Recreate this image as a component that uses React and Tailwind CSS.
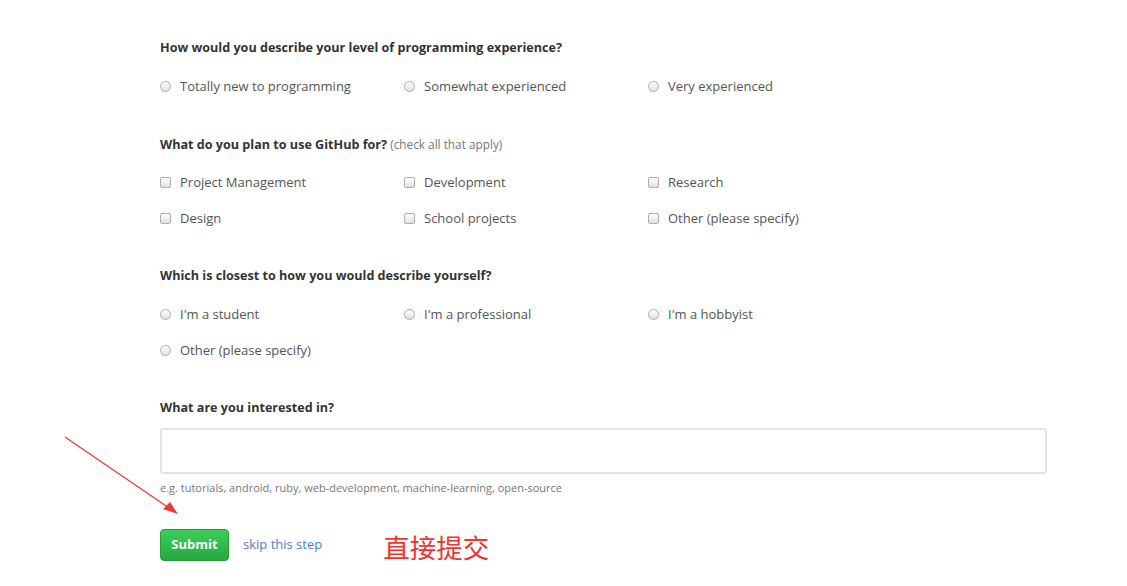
import { useState } from 'react';

const FONT = { fontFamily: '"Open Sans", "Liberation Sans", sans-serif' };

function Radio() {
  return (
    <span className="inline-block w-[11px] h-[11px] rounded-full border border-[#aeaeae] bg-gradient-to-b from-white to-[#e0e0e0] shrink-0" />
  );
}

function Checkbox() {
  return (
    <span className="inline-block w-[11px] h-[11px] rounded-[2px] border border-[#aeaeae] bg-gradient-to-b from-white to-[#e0e0e0] shrink-0" />
  );
}

function Option({ label, type }) {
  return (
    <label className="flex items-center gap-[9px] h-5 text-[13px] leading-5 text-[#555]">
      {type === 'radio' ? <Radio /> : <Checkbox />}
      <span>{label}</span>
    </label>
  );
}

function Question({ title, note, type, options }) {
  return (
    <div className="mb-[38px]">
      <h3 className="h-5 text-[12.6px] leading-5 font-bold text-[#333]">
        {title}
        {note && <span className="font-normal text-[11.8px] text-[#777]"> {note}</span>}
      </h3>
      <div className="mt-[18px] grid grid-cols-[244px_244px_244px] gap-y-4">
        {options.map((o) => (
          <Option key={o} label={o} type={type} />
        ))}
      </div>
    </div>
  );
}

export default function App() {
  const [interest, setInterest] = useState('');

  const questions = [
    {
      title: 'How would you describe your level of programming experience?',
      type: 'radio',
      options: ['Totally new to programming', 'Somewhat experienced', 'Very experienced'],
    },
    {
      title: 'What do you plan to use GitHub for?',
      note: '(check all that apply)',
      type: 'checkbox',
      options: ['Project Management', 'Development', 'Research', 'Design', 'School projects', 'Other (please specify)'],
    },
    {
      title: 'Which is closest to how you would describe yourself?',
      type: 'radio',
      options: ["I'm a student", "I'm a professional", "I'm a hobbyist", 'Other (please specify)'],
    },
  ];

  return (
    <div className="relative w-[1127px] h-[586px] bg-white overflow-hidden" style={FONT}>
      <div className="ml-[160px] w-[887px] pt-[38px]">
        {questions.map((q) => (
          <Question key={q.title} {...q} />
        ))}

        {/* Interests */}
        <div>
          <h3 className="h-5 text-[12.6px] leading-5 font-bold text-[#333]">What are you interested in?</h3>
          <input
            value={interest}
            onChange={(e) => setInterest(e.target.value)}
            className="mt-[10px] block w-full h-[46px] rounded-[3px] border-2 border-[#e3e3e3] bg-white outline-none px-2"
          />
          <p className="mt-[6px] h-4 text-[11px] leading-4 text-[#777]">
            e.g. tutorials, android, ruby, web-development, machine-learning, open-source
          </p>
        </div>

        <div className="mt-[33px] flex items-center">
          <button className="w-[69px] h-[32px] rounded-[4px] border border-[#27993f] bg-gradient-to-b from-[#3ccf5a] to-[#25a83e] text-white text-[13px] font-bold">
            Submit
          </button>
          <a className="ml-[14px] text-[13px] text-[#4d7fc7]">skip this step</a>
          <span
            className="ml-[61px] mt-[4px] text-[26.5px] leading-none text-[#f0332f]"
            style={{ fontFamily: '"Noto Sans CJK SC", sans-serif' }}
          >
            直接提交
          </span>
        </div>
      </div>

      {/* annotation arrow */}
      <svg className="absolute left-0 top-0 pointer-events-none" width="1127" height="586">
        <line x1="65" y1="437" x2="172" y2="510" stroke="#ee3b35" strokeWidth="1.3" />
        <polygon points="178,514 163,509 170,502" fill="#ee3b35" />
      </svg>
    </div>
  );
}
